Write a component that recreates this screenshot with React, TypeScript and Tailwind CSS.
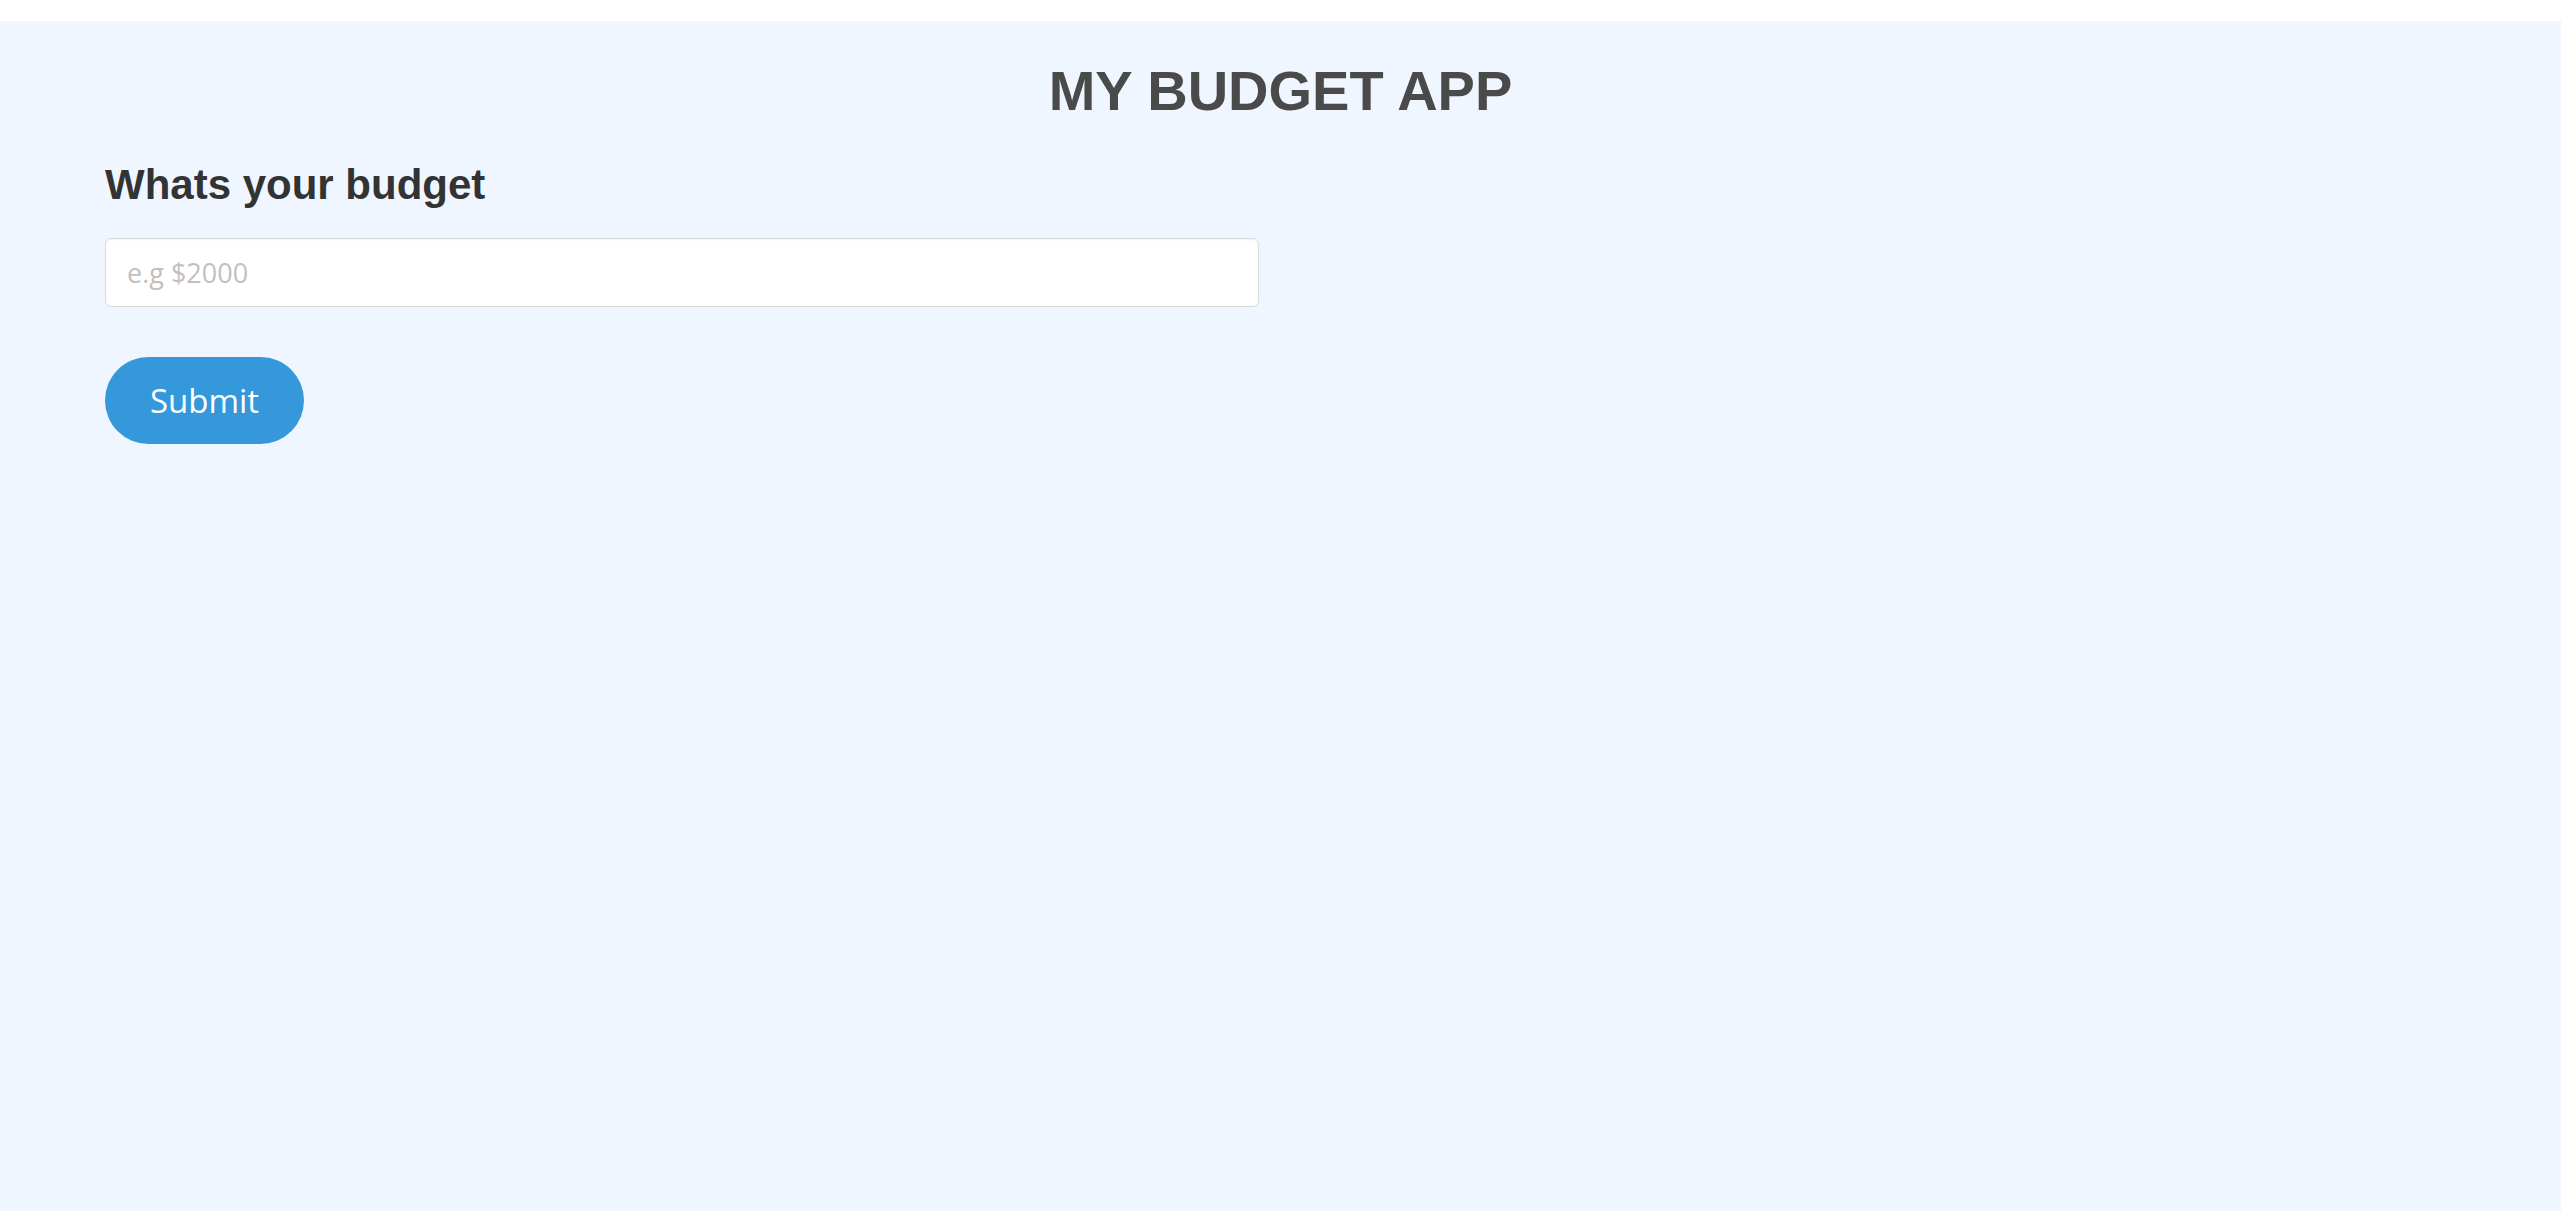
import React from "react";

export default function App() {
  return (
    <div className="flex h-[1211px] w-full flex-col bg-white">
      <div className="h-[21px] shrink-0 bg-white" />
      <div className="flex-1 bg-[#eff6ff] px-[105px] pt-[38px]">
        <h1 className="text-center font-['Liberation_Sans',Arial,sans-serif] text-[56px] font-bold leading-[64px] text-[#4a4a4a]">
          MY BUDGET APP
        </h1>
        <h2 className="mt-[38px] font-['Liberation_Sans',Arial,sans-serif] text-[42px] font-bold leading-[48px] text-[#333333]">
          Whats your budget
        </h2>
        <input
          type="text"
          placeholder="e.g $2000"
          className="mt-[29px] block h-[69px] w-[1154px] rounded-[6px] border-[1.5px] border-[#dadada] bg-white px-[21px] font-['Open_Sans','Noto_Sans',sans-serif] text-[27px] text-[#333] shadow-[inset_0_1px_2px_rgba(0,0,0,0.05)] outline-none placeholder:text-[#c4bfbc]"
        />
        <button className="mt-[50px] flex h-[87px] w-[199px] items-center justify-center rounded-full bg-[#3498db] font-['Open_Sans','Noto_Sans',sans-serif] text-[33px] text-white">
          Submit
        </button>
      </div>
    </div>
  );
}
